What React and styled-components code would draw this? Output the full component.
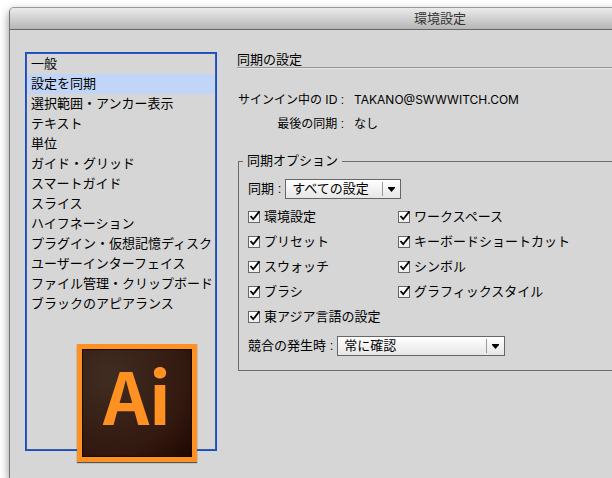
import React, { useState } from "react"
import styled, { createGlobalStyle } from "styled-components"

const GlobalStyle = createGlobalStyle`
  * {
    box-sizing: border-box;
  }

  body {
    margin: 0;
    background: #fff;
    color: #000;
    font-family: "Liberation Sans", "Noto Sans CJK JP", sans-serif;
    font-size: 13px;
    line-height: 20px;
  }

  button, select {
    font: inherit;
    color: inherit;
  }
`

const Desktop = styled.div`
  display: flex;
  min-height: 100vh;
  padding: 7px 0 0 9px;
  overflow: hidden;
`

// The dialog is wider than the visible desktop, it runs off the right side
const Window = styled.main`
  display: flex;
  flex-direction: column;
  flex: none;
  width: calc(100% + 259px);
  border: 1px solid #747474;
  border-top-color: #9a9a9a;
  border-bottom: 0;
  border-radius: 5px 5px 0 0;
  background: #d6d6d6;
  box-shadow: 0 4px 10px rgba(0, 0, 0, 0.45);
`

const TitleBar = styled.header`
  height: 22px;
  border-bottom: 1px solid #686868;
  border-radius: 4px 4px 0 0;
  background: linear-gradient(#ebebeb, #b6b6b6);
`

const Title = styled.h1`
  margin: 0;
  font-size: 13px;
  font-weight: 400;
  line-height: 21px;
  text-align: center;
  color: #333;
`

const Body = styled.div`
  display: flex;
  flex: 1;
  gap: 20px;
  padding: 22px 20px 27px 15px;
`

const Sidebar = styled.nav`
  position: relative;
  flex: none;
  width: 192px;
  padding: 1px;
  border: 1px solid #0b4fdc;
  box-shadow: inset 0 0 0 1px #3c5a9a;
`

const CategoryList = styled.ul`
  margin: 0;
  padding: 0;
  list-style: none;
`

const CategoryButton = styled.button`
  display: block;
  width: 100%;
  height: 20px;
  padding: 0 4px;
  border: 0;
  background: ${props => (props.$active ? "#c0d5f7" : "transparent")};
  line-height: 20px;
  text-align: left;
  white-space: nowrap;
`

const LogoBadge = styled.div`
  position: absolute;
  right: 19px;
  bottom: -12px;
  display: flex;
  align-items: center;
  justify-content: center;
  width: 120px;
  height: 118px;
  padding-bottom: 18px;
  border: 5px solid #ff9122;
  background: radial-gradient(circle at 25% 25%, #402d22, #33190f 65%, #1f0600);
  box-shadow: 0 1px 1px #555, inset 0 0 1px 1px #1a0a04;
  font-family: "Noto Sans CJK JP", sans-serif;
  font-size: 72px;
  font-weight: 700;
  line-height: 90px;
  color: #ff9122;
`

const Panel = styled.section`
  flex: 1;
  min-width: 0;
`

const PanelTitle = styled.h2`
  margin: 0 0 20px;
  border-bottom: 1px solid #949494;
  box-shadow: 0 1px 0 #e6e6e6;
  font-size: 13px;
  font-weight: 400;
  line-height: 15px;
`

const AccountInfo = styled.dl`
  display: grid;
  grid-template-columns: 107px 1fr;
  column-gap: 10px;
  margin: 0 0 15px;
  font-size: 12px;
  line-height: 24px;
`

const InfoLabel = styled.dt`
  text-align: right;
`

const InfoValue = styled.dd`
  margin: 0;
  font-family: ${props => (props.$latin ? "Inter, " : "")}"Liberation Sans",
    "Noto Sans CJK JP", sans-serif;
`

const OptionGroup = styled.fieldset`
  margin: 0 0 0 1px;
  padding: 8px 9px 14px;
  border: 1px solid #6a6a6a;
`

const GroupTitle = styled.legend`
  margin-left: -5px;
  padding: 0 4px;
`

const SelectRow = styled.div`
  display: flex;
  align-items: center;
  gap: 4px;
`

const SelectBox = styled.div`
  position: relative;
  width: ${props => props.$width};
`

const Select = styled.select`
  display: block;
  appearance: none;
  width: 100%;
  height: 20px;
  margin: 0;
  padding: 0 20px 0 6px;
  border: 1px solid #666;
  border-radius: 0;
  background: linear-gradient(#fff, #e6e6e6);
  line-height: 18px;
`

const Arrow = styled.svg`
  position: absolute;
  top: 3px;
  right: 1px;
  width: 18px;
  height: 14px;
  pointer-events: none;
`

const CheckGrid = styled.div`
  display: grid;
  grid-template-columns: 150px 1fr;
  row-gap: 5px;
  margin: 8px 0 9px;
`

const CheckLabel = styled.label`
  display: flex;
  align-items: center;
  gap: 4px;
  grid-column: ${props => props.$column};
  white-space: nowrap;
`

const CheckFrame = styled.span`
  display: grid;
  flex: none;
  width: 12px;
  height: 12px;

  > * {
    grid-area: 1 / 1;
  }
`

const CheckInput = styled.input`
  appearance: none;
  width: 12px;
  height: 12px;
  margin: 0;
  border: 1px solid #666;
  background: linear-gradient(#fff, #eee);

  &:not(:checked) + svg {
    visibility: hidden;
  }
`

const CheckMark = styled.svg`
  width: 12px;
  height: 12px;
  overflow: visible;
  pointer-events: none;
`

const categories = [
  "一般",
  "設定を同期",
  "選択範囲・アンカー表示",
  "テキスト",
  "単位",
  "ガイド・グリッド",
  "スマートガイド",
  "スライス",
  "ハイフネーション",
  "プラグイン・仮想記憶ディスク",
  "ユーザーインターフェイス",
  "ファイル管理・クリップボード",
  "ブラックのアピアランス",
]

const syncOptions = [
  { label: "環境設定", column: 1 },
  { label: "ワークスペース", column: 2 },
  { label: "プリセット", column: 1 },
  { label: "キーボードショートカット", column: 2 },
  { label: "スウォッチ", column: 1 },
  { label: "シンボル", column: 2 },
  { label: "ブラシ", column: 1 },
  { label: "グラフィックスタイル", column: 2 },
  { label: "東アジア言語の設定", column: 1 },
]

const Dropdown = ({ id, label, value, width }) => (
  <SelectRow>
    <label htmlFor={id}>{label} :</label>
    <SelectBox $width={width}>
      <Select id={id} defaultValue={value}>
        <option>{value}</option>
      </Select>
      <Arrow viewBox="0 0 18 14" aria-hidden="true">
        <path d="M.5 0v14" stroke="#999" />
        <path d="M6 5h7v1L9.5 10 6 6z" fill="#000" />
      </Arrow>
    </SelectBox>
  </SelectRow>
)

const Checkbox = ({ label, column }) => (
  <CheckLabel $column={column}>
    <CheckFrame>
      <CheckInput type="checkbox" defaultChecked />
      <CheckMark viewBox="0 0 12 12" aria-hidden="true">
        <path
          d="M2.5 5 5.2 8.2 11.4 .4"
          fill="none"
          stroke="#000"
          strokeWidth="1.8"
        />
      </CheckMark>
    </CheckFrame>
    {label}
  </CheckLabel>
)

const App = () => {
  const [active, setActive] = useState("設定を同期")

  return (
    <>
      <GlobalStyle />
      <Desktop>
        <Window>
          <TitleBar>
            <Title>環境設定</Title>
          </TitleBar>
          <Body>
            <Sidebar>
              <CategoryList>
                {categories.map(name => (
                  <li key={name}>
                    <CategoryButton
                      type="button"
                      $active={active === name}
                      onClick={() => setActive(name)}
                    >
                      {name}
                    </CategoryButton>
                  </li>
                ))}
              </CategoryList>
              <LogoBadge>Ai</LogoBadge>
            </Sidebar>
            <Panel>
              <PanelTitle>同期の設定</PanelTitle>
              <AccountInfo>
                <InfoLabel>サインイン中の ID :</InfoLabel>
                <InfoValue $latin>TAKANO@SWWWITCH.COM</InfoValue>
                <InfoLabel>最後の同期 :</InfoLabel>
                <InfoValue>なし</InfoValue>
              </AccountInfo>
              <OptionGroup>
                <GroupTitle>同期オプション</GroupTitle>
                <Dropdown
                  id="sync-target"
                  label="同期"
                  value="すべての設定"
                  width="116px"
                />
                <CheckGrid>
                  {syncOptions.map(option => (
                    <Checkbox key={option.label} {...option} />
                  ))}
                </CheckGrid>
                <Dropdown
                  id="conflict"
                  label="競合の発生時"
                  value="常に確認"
                  width="168px"
                />
              </OptionGroup>
            </Panel>
          </Body>
        </Window>
      </Desktop>
    </>
  )
}

export default App
